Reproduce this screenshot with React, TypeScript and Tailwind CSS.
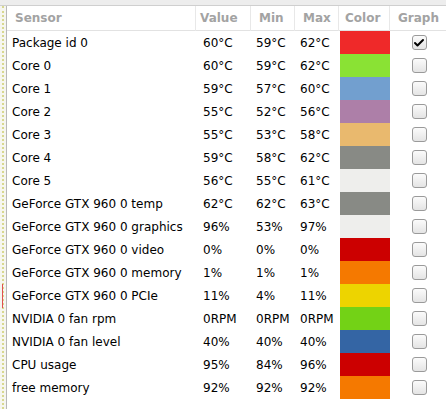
import { Check } from 'lucide-react';

type Row = { name: string; value: string; min: string; max: string; color: string; checked?: boolean };

const rows: Row[] = [
  { name: 'Package id 0', value: '60°C', min: '59°C', max: '62°C', color: '#ef2929', checked: true },
  { name: 'Core 0', value: '60°C', min: '59°C', max: '62°C', color: '#8ae234' },
  { name: 'Core 1', value: '59°C', min: '57°C', max: '60°C', color: '#729fcf' },
  { name: 'Core 2', value: '55°C', min: '52°C', max: '56°C', color: '#ad7fa8' },
  { name: 'Core 3', value: '55°C', min: '53°C', max: '58°C', color: '#e9b96e' },
  { name: 'Core 4', value: '59°C', min: '58°C', max: '62°C', color: '#888a85' },
  { name: 'Core 5', value: '56°C', min: '55°C', max: '61°C', color: '#eeeeec' },
  { name: 'GeForce GTX 960 0 temp', value: '62°C', min: '62°C', max: '63°C', color: '#888a85' },
  { name: 'GeForce GTX 960 0 graphics', value: '96%', min: '53%', max: '97%', color: '#eeeeec' },
  { name: 'GeForce GTX 960 0 video', value: '0%', min: '0%', max: '0%', color: '#cc0000' },
  { name: 'GeForce GTX 960 0 memory', value: '1%', min: '1%', max: '1%', color: '#f57900' },
  { name: 'GeForce GTX 960 0 PCIe', value: '11%', min: '4%', max: '11%', color: '#edd400' },
  { name: 'NVIDIA 0 fan rpm', value: '0RPM', min: '0RPM', max: '0RPM', color: '#73d216' },
  { name: 'NVIDIA 0 fan level', value: '40%', min: '40%', max: '40%', color: '#3465a4' },
  { name: 'CPU usage', value: '95%', min: '84%', max: '96%', color: '#cc0000' },
  { name: 'free memory', value: '92%', min: '92%', max: '92%', color: '#f57900' },
];

const cols = 'grid grid-cols-[189px_55px_44px_44px_51px_55px]';

export default function App() {
  return (
    <div className="flex h-[409px] w-[446px] flex-col overflow-hidden bg-white font-['DejaVu_Sans',sans-serif] text-[12px]">
      <div className="h-[6px] shrink-0 border-b border-[#cfcfcf] bg-[#ededed]" />
      <div className="flex min-h-0 flex-1">
        <div className="relative w-[7px] shrink-0 border-r border-[#b8b8b8] bg-[#f6f6f0]">
          <div className="absolute inset-y-0 left-[2px] border-l-2 border-dotted border-[#d8d890]" />
          <div className="absolute left-[2px] top-[278px] h-[24px] w-px bg-[#e05050]" />
        </div>
        <div className="flex-1">
          <div className={`${cols} h-[25px] items-center border-b border-[#e2e2e2] font-bold text-[#a3a3a3]`}>
            <span className="h-full border-r border-[#e8e8e8] pl-[8px] leading-[25px]">Sensor</span>
            <span className="h-full border-r border-[#e8e8e8] pl-[4px] leading-[25px]">Value</span>
            <span className="h-full border-r border-[#e8e8e8] pl-[8px] leading-[25px]">Min</span>
            <span className="h-full border-r border-[#e8e8e8] pl-[8px] leading-[25px]">Max</span>
            <span className="h-full border-r border-[#e8e8e8] pl-[6px] leading-[25px]">Color</span>
            <span className="h-full pl-[8px] leading-[25px]">Graph</span>
          </div>
          {rows.map((row) => (
            <div key={row.name} className={`${cols} h-[23px] items-center text-black`}>
              <span className="whitespace-nowrap pl-[5px]">{row.name}</span>
              <span className="pl-[7px]">{row.value}</span>
              <span className="pl-[5px]">{row.min}</span>
              <span className="pl-[5px]">{row.max}</span>
              <span className="ml-px h-full" style={{ backgroundColor: row.color }} />
              <span className="flex justify-center pl-[3px]">
                <span className="grid size-[15px] place-items-center rounded-[3px] border border-[#9a9a9a] bg-gradient-to-b from-[#fbfbfb] to-[#e4e4e4] shadow-[0_1px_0_#ffffff]">
                  {row.checked && <Check className="size-[12px] text-black" strokeWidth={4} />}
                </span>
              </span>
            </div>
          ))}
        </div>
      </div>
    </div>
  );
}
